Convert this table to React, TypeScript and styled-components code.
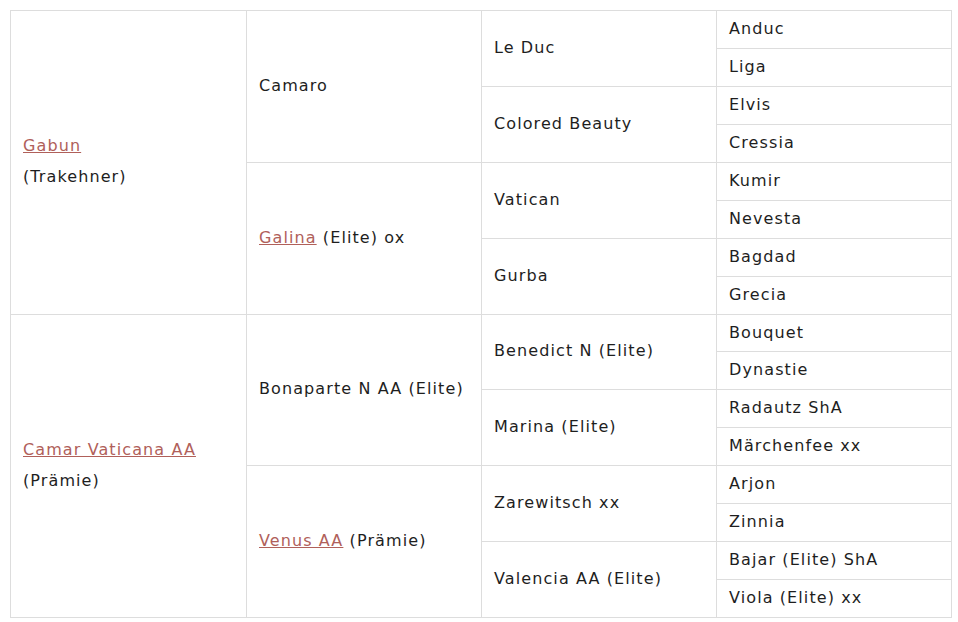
import React from "react";
import styled, { createGlobalStyle } from "styled-components";

const Global = createGlobalStyle`
  html, body { margin: 0; padding: 0; background: #ffffff; }
  body { font-family: "DejaVu Sans", Verdana, sans-serif; }
`;

const Wrap = styled.div`
  padding: 10px 6px 10px 10px;
`;

const Table = styled.table`
  border-collapse: collapse;
  table-layout: fixed;
  font-family: "DejaVu Sans", Verdana, sans-serif;
  font-size: 16px;
  letter-spacing: 1.1px;
  color: #1e1e1e;
  border: 1px solid #dddddd;
`;

const Col = styled.col<{ $w: number }>`
  width: ${(p) => p.$w}px;
`;

const Cell = styled.td`
  border: 1px solid #dddddd;
  padding: 3px 12px 3px 12px;
  line-height: 30.9375px;
  vertical-align: middle;
  height: 30.9375px;
  box-sizing: content-box;
  white-space: nowrap;
`;

const Link = styled.a`
  color: #b0605a;
  text-decoration: underline;
`;

type Horse = { name: string; link?: boolean; rest?: string; br?: boolean };

const g1: Horse[] = [
  { name: "Gabun", link: true, rest: "(Trakehner)", br: true },
  { name: "Camar Vaticana AA", link: true, rest: "(Prämie)", br: true },
];
const g2: Horse[] = [
  { name: "Camaro" },
  { name: "Galina", link: true, rest: "(Elite) ox" },
  { name: "Bonaparte N AA (Elite)" },
  { name: "Venus AA", link: true, rest: "(Prämie)" },
];
const g3 = [
  "Le Duc", "Colored Beauty", "Vatican", "Gurba",
  "Benedict N (Elite)", "Marina (Elite)", "Zarewitsch xx", "Valencia AA (Elite)",
];
const g4 = [
  "Anduc", "Liga", "Elvis", "Cressia", "Kumir", "Nevesta", "Bagdad", "Grecia",
  "Bouquet", "Dynastie", "Radautz ShA", "Märchenfee xx", "Arjon", "Zinnia",
  "Bajar (Elite) ShA", "Viola (Elite) xx",
];

const HorseText = ({ h }: { h: Horse }) =>
  h.link ? (
    <>
      <Link href="#">{h.name}</Link>
      {h.br ? <br /> : " "}
      {h.rest}
    </>
  ) : (
    <>{h.name}</>
  );

export default function App() {
  const rows = g4.map((name, i) => (
    <tr key={i}>
      {i % 8 === 0 && (
        <Cell rowSpan={8}>
          <HorseText h={g1[i / 8]} />
        </Cell>
      )}
      {i % 4 === 0 && (
        <Cell rowSpan={4}>
          <HorseText h={g2[i / 4]} />
        </Cell>
      )}
      {i % 2 === 0 && <Cell rowSpan={2}>{g3[i / 2]}</Cell>}
      <Cell>{name}</Cell>
    </tr>
  ));
  return (
    <>
      <Global />
      <Wrap>
        <Table>
          <colgroup>
            <Col $w={236} />
            <Col $w={235} />
            <Col $w={235} />
            <Col $w={235} />
          </colgroup>
          <tbody>{rows}</tbody>
        </Table>
      </Wrap>
    </>
  );
}
